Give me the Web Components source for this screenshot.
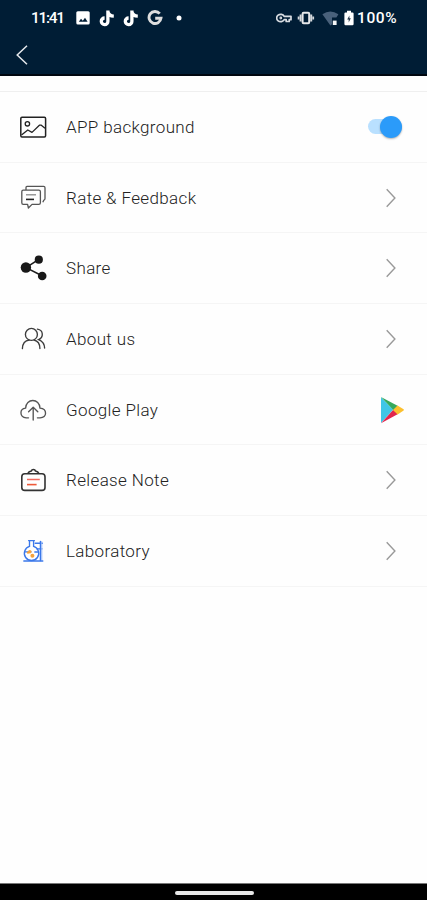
<!DOCTYPE html>
<html lang="en">
<head>
<meta charset="utf-8">
<meta name="viewport" content="width=device-width, initial-scale=1">
<title>Settings</title>
<style>
	html,
	body {
		height: 100%;
		margin: 0;
	}
	body {
		background: #fefefe;
		font-family: Roboto, "Liberation Sans", sans-serif;
	}
</style>
</head>
<body>
<settings-screen>
	<status-bar slot="top" time="11:41" battery="100%"></status-bar>
	<nav-header slot="top"></nav-header>
	<settings-row icon="image">APP background<toggle-switch slot="end"></toggle-switch></settings-row>
	<settings-row icon="feedback">Rate &amp; Feedback</settings-row>
	<settings-row icon="share">Share</settings-row>
	<settings-row icon="people">About us</settings-row>
	<settings-row icon="cloud">Google Play<app-icon slot="end" name="play"></app-icon></settings-row>
	<settings-row icon="note">Release Note</settings-row>
	<settings-row icon="lab">Laboratory</settings-row>
	<gesture-bar slot="bottom"></gesture-bar>
</settings-screen>

<script>
(function () {
	// each entry: [width, height, svg content]
	const ICONS = {
		image: [28, 28, `
			<g fill="none" stroke="#222" stroke-width="1.5" stroke-linejoin="round">
				<rect x="1.8" y="4.2" width="24.8" height="19.8" rx="1.2"/>
				<circle cx="8.4" cy="10.8" r="2.2" stroke-width="1.3"/>
				<path d="M2.5 22L8.8 17L13 19.4L20.4 12.2L22.3 12.2L26 15.2" stroke-width="1.3"/>
			</g>`],
		feedback: [28, 28, `
			<g fill="none" stroke="#555" stroke-width="1.3" stroke-linejoin="round">
				<path d="M7 6V3.4Q7 2.4 8 2.4H24.6Q26 2.4 26 3.8V14.6Q26 16 24.8 16.2L23.8 18.3"/>
				<path d="M4.2 6.2H19.8Q21.4 6.2 21.4 7.8V18.8Q21.4 20.4 19.8 20.4H13L9.4 24L8.6 20.4H4.2Q2.8 20.4 2.8 18.8V7.8Q2.8 6.2 4.2 6.2Z"/>
				<path d="M7 10.8H17" stroke="#888"/>
				<path d="M7 15.4H15" stroke="#222" stroke-width="1.6"/>
			</g>`],
		share: [28, 28, `
			<path d="M7 13.6L19.4 5.6M7 13.6L23 21.8" stroke="#1c1c1c" stroke-width="1.6"/>
			<g fill="#181818">
				<circle cx="6.9" cy="13.5" r="5.2"/>
				<circle cx="19.8" cy="5.7" r="4.1"/>
				<circle cx="23.2" cy="22" r="4.3"/>
			</g>`],
		people: [28, 28, `
			<g fill="none" stroke="#3c3c3c" stroke-width="1.35" stroke-linecap="round">
				<circle cx="12.4" cy="9.4" r="6"/>
				<path d="M3.4 23.6C3.6 18.6 6.3 15.5 10.2 15M15 15C18.8 15.9 20.9 19 20.9 23.6"/>
				<path d="M18.4 4.2C24.6 5.2 24.8 12.5 19.6 14.6C23.6 16.3 25.5 19.2 25.6 23"/>
			</g>`],
		cloud: [28, 28, `
			<g fill="none" stroke="#555" stroke-width="1.35" stroke-linecap="round" stroke-linejoin="round">
				<path d="M9.5 21.8H7.2C0.3 21.2 0.3 12.8 6.6 12.2C6.8 1.9 20.8 1.9 21 12.2C28.6 13 28.2 21.6 21 21.8H18.4"/>
				<path d="M14.2 24V11.6M9.6 15.8L14.2 11.3L18.8 15.8"/>
			</g>`],
		note: [28, 28, `
			<g fill="none" stroke="#333" stroke-width="1.6">
				<rect x="2.8" y="7.8" width="23.2" height="16.6" rx="3"/>
				<path d="M8.8 7.6C9.7 5.3 11.4 5.1 12.4 4.9C12.8 3 16 3 16.4 4.9C17.4 5.1 19 5.3 19.9 7.6"/>
				<path d="M8 13.5H20.8" stroke="#f06a5e" stroke-width="1.5"/>
				<path d="M8 18.6H17.6" stroke="#ee5838" stroke-width="1.6"/>
			</g>`],
		lab: [28, 28, `
			<g fill="none" stroke="#3b78ea" stroke-width="1.35" stroke-linecap="round">
				<path d="M9.6 3.6H15.4M10.5 4V9.4A7.2 7.2 0 1 0 14.6 9.4V4"/>
				<path d="M4.8 24H23.8"/>
				<path d="M16.2 6.2H23.4M18 11.8H23"/>
				<path d="M21.5 4.4V23.4" stroke-width="1.5"/>
				<path d="M5.6 14.8H12M15.8 15H18.6"/>
			</g>
			<path d="M22.8 4.4V23" stroke="#9dbcf7"/>
			<g fill="#f6a23c">
				<circle cx="10.8" cy="14.8" r="1.8"/>
				<circle cx="13.4" cy="18.8" r="2"/>
				<circle cx="9" cy="15.6" r="1.2"/>
			</g>`],
		chevron: [12, 20, `
			<path d="M1.7 1.3L9.9 10L1.7 18.7" fill="none" stroke="#999" stroke-width="1.4"/>`],
		play: [24, 28, `
			<path d="M1 1.2L13.2 13.8L1 27Z" fill="#3fc6e6"/>
			<path d="M1 1L18 10L13.5 14.2Z" fill="#36a95c"/>
			<path d="M1 27.2L18 18L13.3 13.8Z" fill="#e2254c"/>
			<path d="M13 14L17.5 9.6L23.6 13.2Q24.1 13.8 23.6 14.4L17.6 18.4Z" fill="#fcc02e"/>`],
		back: [14, 22, `
			<path d="M12 1.7L2.2 11L12 20.3" fill="none" stroke="#e4e8ec" stroke-width="1.5"/>`],
		photo: [14, 14, `
			<rect x="0.3" y="0.2" width="13.4" height="13.4" rx="1.5" fill="#fff"/>
			<path d="M2.8 10.8L5 7.7L6.8 9.7L9 6.8L11.6 10.8Z" fill="#001d35"/>`],
		tiktok: [15, 17, `
			<path d="M8.9 0.6V11.2A3.3 3.3 0 1 1 5.6 8M8.9 1.6C9.4 4.4 11.6 6 14.8 6.1" fill="none" stroke="#fff" stroke-width="3.3"/>`],
		google: [16, 16, `
			<path d="M12.7 3.7A6 6 0 1 0 14 8.2H8.2" fill="none" stroke="#dedede" stroke-width="2.9"/>`],
		dot: [6, 6, `
			<circle cx="3" cy="3" r="2.5" fill="#fff"/>`],
		key: [16, 10, `
			<g fill="none" stroke="#d8dde2" stroke-width="1.7" stroke-linejoin="round">
				<path d="M8.2 3.3A4 3.7 0 1 0 8.2 6.7H10.2V8.5H13.2V6.7H15V3.3Z"/>
				<circle cx="4.8" cy="5" r="0.8" stroke-width="1.2"/>
			</g>`],
		vibrate: [18, 14, `
			<rect x="5.6" y="1.8" width="6.6" height="10.4" rx="1" fill="none" stroke="#e6e8ea" stroke-width="2"/>
			<path d="M3.6 3.4V10.6M14.2 3.4V10.6" stroke="#d5d9dd" stroke-width="2"/>
			<path d="M1.6 5.4V8.6M16.2 5.4V8.6" stroke="#d5d9dd" stroke-width="1.8"/>`],
		wifi: [17, 15, `
			<path d="M0.4 3.2Q8.3 -2.2 16.4 3.2L14.4 6.4H10V13.2L8.4 14.4Z" fill="#49617b"/>
			<rect x="10.8" y="9.6" width="3.8" height="4.4" fill="#f4f5f6"/>`],
		battery: [10, 16, `
			<path d="M3 0.8H7V2.4H8.4Q9.6 2.4 9.6 3.6V14Q9.6 15.2 8.4 15.2H1.6Q0.4 15.2 0.4 14V3.6Q0.4 2.4 1.6 2.4H3Z" fill="#fff"/>
			<path d="M5.4 5.4L3.2 9.4H4.7V12.4L6.8 8.2H5.4Z" fill="#26384b"/>`],
	};

	class AppIcon extends HTMLElement {
		connectedCallback() {
			const [w, h, content] = ICONS[this.getAttribute('name')];
			this.attachShadow({ mode: 'open' }).innerHTML = `
			<style>
			:host {
				display: block;
				flex: none;
			}
			svg {
				display: block;
			}
			</style>
			<svg width="${w}" height="${h}" viewBox="0 0 ${w} ${h}" aria-hidden="true">${content}</svg>`;
		}
	}

	class StatusBar extends HTMLElement {
		connectedCallback() {
			this.attachShadow({ mode: 'open' }).innerHTML = `
			<style>
			:host {
				display: flex;
				justify-content: space-between;
				box-sizing: border-box;
				height: 36px;
				padding: 0 30px 0 31px;
				background: #001d35;
				color: #fff;
				font: 500 15.5px/36px Roboto, sans-serif;
			}
			div {
				display: flex;
				align-items: center;
			}
			.left {
				gap: 9px;
			}
			.time {
				width: 36px;
				letter-spacing: -1.3px;
			}
			.dot {
				margin-left: 4px;
			}
			.battery {
				width: 40px;
				margin-left: 3px;
				letter-spacing: 0.6px;
				white-space: nowrap;
			}
			.vibrate {
				margin: 0 7px 0 5px;
			}
			.wifi {
				margin-right: 5px;
			}
			</style>
			<div class="left">
				<span class="time">${this.getAttribute('time')}</span>
				<app-icon name="photo"></app-icon>
				<app-icon name="tiktok"></app-icon>
				<app-icon name="tiktok"></app-icon>
				<app-icon name="google"></app-icon>
				<app-icon class="dot" name="dot"></app-icon>
			</div>
			<div>
				<app-icon name="key"></app-icon>
				<app-icon class="vibrate" name="vibrate"></app-icon>
				<app-icon class="wifi" name="wifi"></app-icon>
				<app-icon name="battery"></app-icon>
				<span class="battery">${this.getAttribute('battery')}</span>
			</div>`;
		}
	}

	class NavHeader extends HTMLElement {
		connectedCallback() {
			this.attachShadow({ mode: 'open' }).innerHTML = `
			<style>
			:host {
				display: flex;
				align-items: center;
				box-sizing: border-box;
				height: 40px;
				padding: 0 15px;
				background: #001d35;
				border-bottom: 2px solid #000710;
			}
			</style>
			<app-icon name="back"></app-icon>`;
		}
	}

	class ToggleSwitch extends HTMLElement {
		connectedCallback() {
			this.attachShadow({ mode: 'open' }).innerHTML = `
			<style>
			:host {
				display: flex;
				align-items: center;
				justify-content: flex-end;
				width: 34px;
				height: 15px;
				margin-right: 3px;
				border-radius: 8px;
				background: #b9e0ff;
			}
			i {
				width: 22px;
				height: 22px;
				flex: none;
				border-radius: 50%;
				background: #2b9bfa;
				box-shadow: 0 1px 2px rgba(0, 0, 0, 0.3);
			}
			</style>
			<i></i>`;
			this.setAttribute('role', 'switch');
			this.setAttribute('aria-checked', 'true');
		}
	}

	class SettingsRow extends HTMLElement {
		connectedCallback() {
			this.attachShadow({ mode: 'open' }).innerHTML = `
			<style>
			:host {
				display: flex;
				align-items: center;
				box-sizing: border-box;
				height: 70.7px;
				padding: 0 22px 0 19px;
				border-bottom: 1px solid #f5f5f5;
				color: #222;
				font-size: 17px;
				font-weight: 300;
				letter-spacing: 0.36px;
			}
			.label {
				flex: 1;
				margin-left: 19px;
			}
			.chevron {
				margin-right: 8px;
			}
			::slotted(app-icon) {
				margin-right: 1px;
			}
			</style>
			<app-icon name="${this.getAttribute('icon')}"></app-icon>
			<span class="label"><slot></slot></span>
			<slot name="end"><app-icon class="chevron" name="chevron"></app-icon></slot>`;
		}
	}

	class GestureBar extends HTMLElement {
		connectedCallback() {
			this.attachShadow({ mode: 'open' }).innerHTML = `
			<style>
			:host {
				display: flex;
				align-items: center;
				justify-content: center;
				box-sizing: border-box;
				height: 17px;
				padding-left: 1px;
				border-top: 1px solid #777;
				background: #000;
			}
			i {
				width: 79px;
				height: 4px;
				margin-top: 1px;
				border-radius: 2px;
				background: #e8e8e8;
			}
			</style>
			<i></i>`;
		}
	}

	class SettingsScreen extends HTMLElement {
		connectedCallback() {
			this.attachShadow({ mode: 'open' }).innerHTML = `
			<style>
			:host {
				display: flex;
				flex-direction: column;
				height: 100vh;
				overflow: hidden;
			}
			main {
				flex: 1;
				margin-top: 15px;
				border-top: 1px solid #efefef;
			}
			</style>
			<slot name="top"></slot>
			<main><slot></slot></main>
			<slot name="bottom"></slot>`;
		}
	}

	customElements.define('app-icon', AppIcon);
	customElements.define('status-bar', StatusBar);
	customElements.define('nav-header', NavHeader);
	customElements.define('toggle-switch', ToggleSwitch);
	customElements.define('settings-row', SettingsRow);
	customElements.define('gesture-bar', GestureBar);
	customElements.define('settings-screen', SettingsScreen);
})();
</script>
</body>
</html>
